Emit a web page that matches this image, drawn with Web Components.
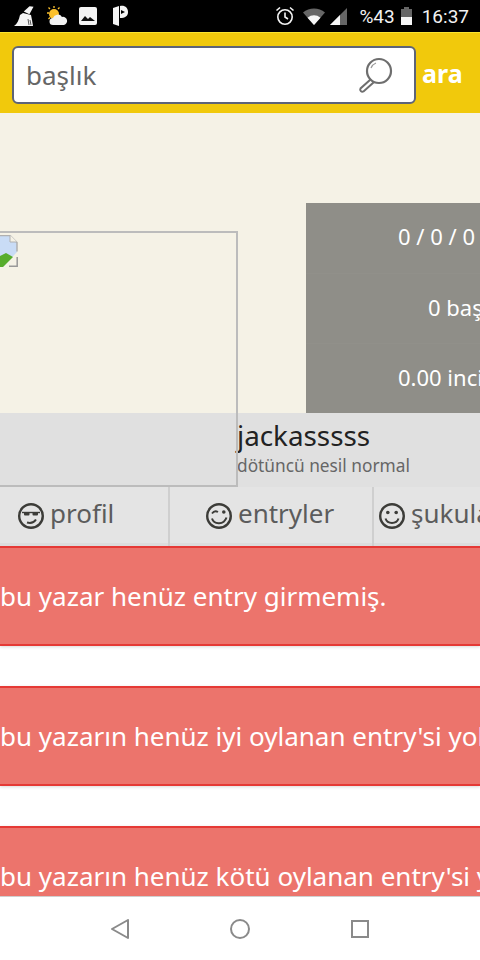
<!DOCTYPE html>
<html lang="tr">
<head>
<meta charset="utf-8">
<title>jackasssss</title>
<style>
  html, body { margin: 0; padding: 0; }
  body { width: 480px; height: 960px; overflow: hidden; font-family: "Noto Sans", sans-serif; background: #fff; }
  #app { display: flex; flex-direction: column; height: 960px; overflow: hidden; }
</style>
</head>
<body>
<div id="app">
  <status-bar></status-bar>
  <search-header></search-header>
  <profile-hero name="jackasssss" rank="dötüncü nesil normal"></profile-hero>
  <tab-bar></tab-bar>
  <alert-list>
    <alert-box>bu yazar henüz entry girmemiş.</alert-box>
    <alert-box>bu yazarın henüz iyi oylanan entry'si yok.</alert-box>
    <alert-box>bu yazarın henüz kötü oylanan entry'si yok.</alert-box>
  </alert-list>
  <nav-bar></nav-bar>
</div>

<script>
class StatusBar extends HTMLElement {
  constructor () {
    super()
    this.attachShadow({ mode: 'open' }).innerHTML = `
      <style>
      :host { display: flex; flex: none; height: 32px; background: #000; color: #f2f2f2; align-items: center; justify-content: space-between; padding: 0 11px 0 13px; font: 19px "Roboto", sans-serif; }
      .left, .right { display: flex; align-items: center; }
      .left { gap: 11px; }
      svg { display: block; flex: none; }
      </style>
      <div class="left">
        <svg width="22" height="22" viewBox="0 0 22 22"><path d="M20 1l-4 0-5 6 6 2z" fill="#f4f4f4" transform="rotate(8 15 5)"/><path d="M10 8l8 2 1 5 1 6H1c3-2 5-6 6-11z" fill="#f4f4f4"/><path d="M15 14l1 6M17 15l1 5" stroke="#333" stroke-width=".8"/></svg>
        <svg width="22" height="22" viewBox="0 0 22 22"><circle cx="8" cy="9" r="5" fill="#fbc02d"/><path d="M8 1v2M1 8h2M2.500 2.500l1.500 1.500M13.500 2.500l-1.500 1.500M2.500 14l1.500-1.500" stroke="#fbc02d" stroke-width="1.300"/><path d="M7 20a3.500 3.500 0 0 1 0-7 5 5 0 0 1 9-1 4 4 0 0 1 2 8z" fill="#f2f2f2"/></svg>
        <svg width="18" height="18" viewBox="0 0 18 18"><rect width="18" height="18" rx="2" fill="#f4f4f4"/><path d="M2 14l4-5 3 3 2-2 5 4z" fill="#111"/></svg>
        <svg width="16" height="22" viewBox="0 0 16 22" style="margin-left:4px"><path d="M1 3l6-2v20l-6-2z" fill="#f4f4f4"/><path d="M8 1c5-1 8 2 8 6s-3 6-8 6z" fill="#f4f4f4"/><path d="M9 5l4 2-4 2z" fill="#000"/></svg>
      </div>
      <div class="right">
        <svg width="20" height="20" viewBox="0 0 20 20" fill="none" stroke="#f4f4f4" stroke-width="1.600"><circle cx="10" cy="11" r="7.200"/><path d="M10 6.500V11l3 2M1.500 4.500l3.500-3M18.500 4.500l-3.500-3"/></svg>
        <svg width="22" height="17" viewBox="0 0 22 17" style="margin-left:8px"><path d="M0 4.500C6-1 16-1 22 4.500L11 17z" fill="#666"/><path d="M4.500 9.800c4-3.300 9-3.300 13 0L11 17z" fill="#f6f6f6"/></svg>
        <svg width="17" height="17" viewBox="0 0 17 17" style="margin-left:5px"><path d="M17 0v17H0z" fill="#666"/><path d="M10 7v10H0z" fill="#f6f6f6"/></svg>
        <span style="margin-left:12px">%43</span>
        <svg width="11" height="18" viewBox="0 0 11 18" style="margin-left:6px"><path d="M3 0h5v2h3v16H0V2h3z" fill="#666"/><path d="M0 10h11v8H0z" fill="#f6f6f6"/></svg>
        <span style="margin-left:10px">16:37</span>
      </div>`
  }
}

class SearchHeader extends HTMLElement {
  constructor () {
    super()
    this.attachShadow({ mode: 'open' }).innerHTML = `
      <style>
      :host { display: flex; flex: none; box-sizing: border-box; height: 81px; background: #f1c90c; border-top: 1px solid #fbe431; padding: 13px 0 0 12px; gap: 6px; align-items: flex-start; font-family: "Noto Sans", sans-serif; }
      .box { box-sizing: border-box; width: 404px; height: 58px; background: #fff; border: 2px solid #5d6478; border-radius: 6px; display: flex; align-items: center; justify-content: space-between; padding: 0 20px 0 12px; }
      .ph { font-size: 26px; color: #666; }
      .go { font-size: 25px; font-weight: 700; color: #fff; line-height: 54px; }
      svg { display: block; }
      </style>
      <div class="box">
        <span class="ph">başlık</span>
        <svg width="38" height="38" viewBox="0 0 38 38" fill="none" stroke="#6e6e6e"><circle cx="23" cy="15" r="12" stroke-width="2.200"/><path d="M15 12a9 9 0 0 1 5-5" stroke-width="1.200" stroke="#999"/><path d="M14.500 23.500l-10 9a2.200 2.200 0 0 0 3 3l10-9" stroke-width="2"/></svg>
      </div>
      <span class="go">ara</span>`
  }
}

class ProfileHero extends HTMLElement {
  constructor () {
    super()
    this.attachShadow({ mode: 'open' }).innerHTML = `
      <style>
      :host { display: block; flex: none; position: relative; height: 374px; background: #f5f2e6; font-family: "Noto Sans", sans-serif; }
      .top { display: flex; justify-content: flex-end; height: 300px; box-sizing: border-box; padding-top: 90px; }
      .stats { width: 174px; height: 210px; background: #8f8e88; display: flex; flex-direction: column; color: #fff; font-size: 22px; overflow: hidden; }
      .stats div { height: 70px; box-sizing: border-box; padding-left: 92px; line-height: 67px; white-space: nowrap; }
      .stats div + div { border-top: 1px solid #91908a; }
      .stats .mid { padding-left: 122px; }
      .info { height: 74px; background: #e0e0e0; box-sizing: border-box; padding: 3px 0 0 237px; }
      .name { font-size: 27.800px; line-height: 38px; color: #222; }
      .rank { font-size: 17.300px; line-height: 24px; color: #666; white-space: nowrap; }
      .avatar { position: absolute; left: -2px; top: 118px; width: 238px; height: 252px; border: 2px solid #bcbcbc; border-left: 0; }
      .broken { position: absolute; left: 2px; top: 2px; display: block; }
      </style>
      <div class="top">
        <div class="stats"><div>0 / 0 / 0</div><div class="mid">0 başlık</div><div>0.00 incir</div></div>
      </div>
      <div class="info">
        <div class="name">${this.getAttribute('name')}</div>
        <div class="rank">${this.getAttribute('rank')}</div>
      </div>
      <div class="avatar">
        <svg class="broken" width="18" height="32" viewBox="0 0 18 32"><path d="M0 0h10l7 7v10L3 32H0z" fill="#c9dcf6"/><path d="M0 21l6-3 7 4L3 32H0z" fill="#57ad2c"/><path d="M0 .5h10l7 7v9" fill="none" stroke="#b0b0b0" stroke-width="1.500"/><path d="M10 0v7h7" fill="#f5f2e6" stroke="#b0b0b0"/><path d="M17.200 22v9.200H9" fill="none" stroke="#999" stroke-width="1.500"/></svg>
      </div>`
  }
}

class TabBar extends HTMLElement {
  constructor () {
    super()
    const face = (mouth, eyes) => `<svg width="28" height="28" viewBox="0 0 28 28" fill="none" stroke="#3c3c38" stroke-width="2.400"><circle cx="14" cy="14" r="11.800"/>${eyes}${mouth}</svg>`
    const smile = '<path d="M7 16.500c2 6.500 12 6.500 14.500-1" stroke-width="2"/>'
    this.attachShadow({ mode: 'open' }).innerHTML = `
      <style>
      :host { display: grid; flex: none; grid-template-columns: 170px 204px 1fr; height: 59px; box-sizing: border-box; background: #e4e4e4; box-shadow: inset 0 -3px #dcdcdc; font: 26px "Noto Sans", sans-serif; color: #5c5c5c; overflow: hidden; }
      .tab { display: flex; align-items: center; gap: 5px; box-sizing: border-box; white-space: nowrap; border-right: 2px solid #cfcfcf; padding-bottom: 2px; }
      .tab span { margin-bottom: 5px; }
      .profil { padding-left: 17px; }
      .entryler { padding-left: 35px; }
      .sukular { padding-left: 4px; border-right: 0; }
      svg { flex: none; }
      </style>
      <div class="tab profil">${face('<path d="M10 20.500c3.500 1 7 0 9-3" stroke-width="2"/>', '<path d="M5 10.500h18" stroke-width="1.400"/><rect x="7" y="10" width="5.500" height="3.500" rx="1" fill="#3c3c38" stroke="none"/><rect x="15.500" y="10" width="5.500" height="3.500" rx="1" fill="#3c3c38" stroke="none"/>')}<span>profil</span></div>
      <div class="tab entryler">${face(smile, '<path d="M7 11.500c1.500-2.200 4-2.700 6-1.500" stroke-width="1.800"/><circle cx="18.800" cy="10" r="1.800" fill="#3c3c38" stroke="none"/>')}<span>entryler</span></div>
      <div class="tab sukular">${face('<path d="M7.500 16.500c2 6 11 6 13 0" stroke-width="2"/>', '<circle cx="9.800" cy="10.500" r="1.800" fill="#3c3c38" stroke="none"/><circle cx="18.200" cy="10.500" r="1.800" fill="#3c3c38" stroke="none"/>')}<span>şukular</span></div>`
  }
}

class AlertList extends HTMLElement {
  constructor () {
    super()
    this.attachShadow({ mode: 'open' }).innerHTML = `
      <style>
      :host { display: flex; flex-direction: column; flex: 1; min-height: 0; overflow: hidden; gap: 40px; background: #fff; border-bottom: 1px solid #cfcfcf; }
      </style>
      <slot></slot>`
  }
}

class AlertBox extends HTMLElement {
  constructor () {
    super()
    this.attachShadow({ mode: 'open' }).innerHTML = `
      <style>
      :host { display: flex; flex: none; align-items: center; box-sizing: border-box; height: 100px; background: #ec746c; border: solid #e53935; border-width: 2px 0; color: #fff; font: 26px "Noto Sans", sans-serif; white-space: nowrap; overflow: hidden; box-shadow: 0 1px 3px rgba(0,0,0,.15); }
      </style>
      <slot></slot>`
  }
}

class NavBar extends HTMLElement {
  constructor () {
    super()
    this.attachShadow({ mode: 'open' }).innerHTML = `
      <style>
      :host { display: flex; flex: none; height: 63px; background: #fff; justify-content: center; align-items: center; gap: 100px; }
      svg { display: block; fill: none; stroke: #8a8a8a; stroke-width: 2; }
      </style>
      <svg width="20" height="20" viewBox="0 0 20 20"><path d="M18 1v18L2 10z" stroke-linejoin="round"/></svg>
      <svg width="20" height="20" viewBox="0 0 20 20"><circle cx="10" cy="10" r="9"/></svg>
      <svg width="20" height="20" viewBox="0 0 20 20"><rect x="2" y="2" width="16" height="16"/></svg>`
  }
}

customElements.define('status-bar', StatusBar)
customElements.define('search-header', SearchHeader)
customElements.define('profile-hero', ProfileHero)
customElements.define('tab-bar', TabBar)
customElements.define('alert-list', AlertList)
customElements.define('alert-box', AlertBox)
customElements.define('nav-bar', NavBar)
</script>
</body>
</html>
